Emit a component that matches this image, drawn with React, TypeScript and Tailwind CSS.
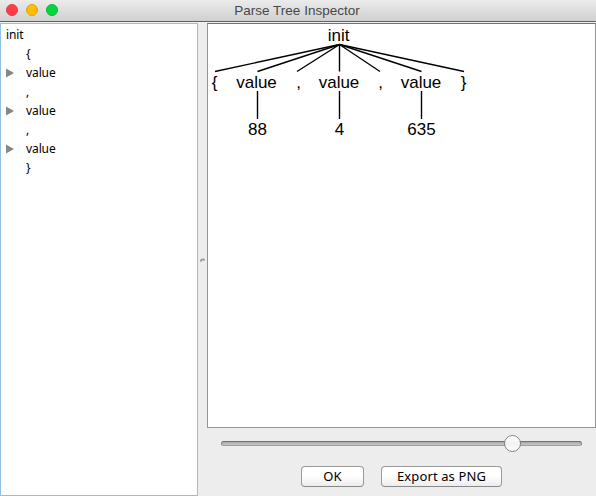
const rows = [
  { text: '{', open: false },
  { text: 'value', open: true },
  { text: ',', open: false },
  { text: 'value', open: true },
  { text: ',', open: false },
  { text: 'value', open: true },
  { text: '}', open: false },
];

const children = [
  { text: '{', x: 214.5, end: 215 },
  { text: 'value', x: 256.5, end: 257.5, leaf: '88' },
  { text: ',', x: 298.5, end: 297 },
  { text: 'value', x: 339, end: 339.5, leaf: '4' },
  { text: ',', x: 380.5, end: 380 },
  { text: 'value', x: 421, end: 421.5, leaf: '635' },
  { text: '}', x: 463.5, end: 464 },
];

function TitleBar() {
  return (
    <header className="relative flex h-[22px] shrink-0 items-center border-b border-[#606060] bg-linear-to-b from-[#ebebeb] to-[#d0d0d0] pl-[6px]">
      <div className="flex gap-2 pb-px">
        <span className="size-3 rounded-full border border-[#e33e44] bg-[#ff3b47]" />
        <span className="size-3 rounded-full border border-[#e0a023] bg-[#ffbd00]" />
        <span className="size-3 rounded-full border border-[#14b23b] bg-[#00d73d]" />
      </div>
      <h1 className="absolute inset-x-0 top-0 pr-[2px] text-center font-['Liberation_Sans',sans-serif] text-[13.5px] leading-[21px] tracking-[0.02px] text-[#484848]">
        Parse Tree Inspector
      </h1>
    </header>
  );
}

function TreeList() {
  return (
    <aside className="w-[198px] shrink-0 border border-[#91bfe7] bg-white pt-px font-['Noto_Sans',sans-serif] text-[12px] leading-[19px] tracking-[-0.1px] text-black">
      <div className="h-[19px] pl-[5px]">init</div>
      {rows.map((row, i) => (
        <div key={i} className="flex h-[19px] items-center pl-[5px]">
          <div className="w-5">
            {row.open && (
              <svg width="8" height="10" viewBox="0 0 8 10" className="block">
                <path d="M0 .5 8 5 0 9.5Z" fill="#868686" />
              </svg>
            )}
          </div>
          <span>{row.text}</span>
        </div>
      ))}
    </aside>
  );
}

function ParseTree() {
  return (
    <div className="h-[405px] border border-[#949494] border-t-[#707070] bg-white">
      <svg width="387" height="403" viewBox="208 24 387 403" className="block font-['Liberation_Sans',sans-serif] text-[17px]" textAnchor="middle">
        <text x="338.7" y="41">init</text>
        {children.map((node, i) => (
          <g key={i}>
            <line x1="339.5" y1="44.5" x2={node.end} y2="71.5" stroke="#000" strokeWidth="1.4" />
            <text x={node.x} y="88">{node.text}</text>
            {node.leaf && (
              <>
                <line x1={node.end} y1="91" x2={node.end} y2="119" stroke="#000" strokeWidth="1.4" />
                <text x={node.end} y="135">{node.leaf}</text>
              </>
            )}
          </g>
        ))}
      </svg>
    </div>
  );
}

function Slider() {
  return (
    <div className="ml-[14px] mt-[6px] flex h-[19px] w-[361px] items-center">
      <div className="h-[5px] w-[284px] rounded-l-full border border-[#858585] border-b-[#a0a0a0] border-t-[#707070] bg-linear-to-b from-[#a8a8a8] to-[#c8c8c8]" />
      <div className="-mx-px size-[17px] rounded-full border border-[#858585] bg-linear-to-b from-white via-[#f2f2f2] to-white" />
      <div className="h-[5px] flex-1 rounded-r-full border border-[#858585] border-b-[#a0a0a0] border-t-[#707070] bg-linear-to-b from-[#a8a8a8] to-[#c8c8c8]" />
    </div>
  );
}

const buttonClass =
  "h-[21px] rounded-[4px] border border-[#9a9a9a] border-b-[#898989] bg-linear-to-b from-white from-45% to-[#ededed] text-center font-['Noto_Sans',sans-serif] text-[13px] leading-[19px] tracking-[0.12px] text-black";

export default function App() {
  return (
    <div className="flex h-[496px] w-[596px] flex-col overflow-hidden bg-[#ededed]">
      <TitleBar />
      <main className="flex min-h-0 flex-1 border-t border-[#f2f2f2]">
        <TreeList />
        <div className="flex w-[9px] shrink-0 items-center justify-center">
          <svg width="5" height="4" viewBox="0 0 5 4">
            <path d="M0 3.5V2L2 .5H4L5 1.5V2.5H2V3.5Z" fill="#999999" />
          </svg>
        </div>
        <section className="min-w-0 flex-1">
          <ParseTree />
          <Slider />
          <div className="ml-[94px] mt-[13px] flex gap-[17px]">
            <button className={`${buttonClass} w-[63px]`}>OK</button>
            <button className={`${buttonClass} w-[121px]`}>Export as PNG</button>
          </div>
        </section>
      </main>
    </div>
  );
}
